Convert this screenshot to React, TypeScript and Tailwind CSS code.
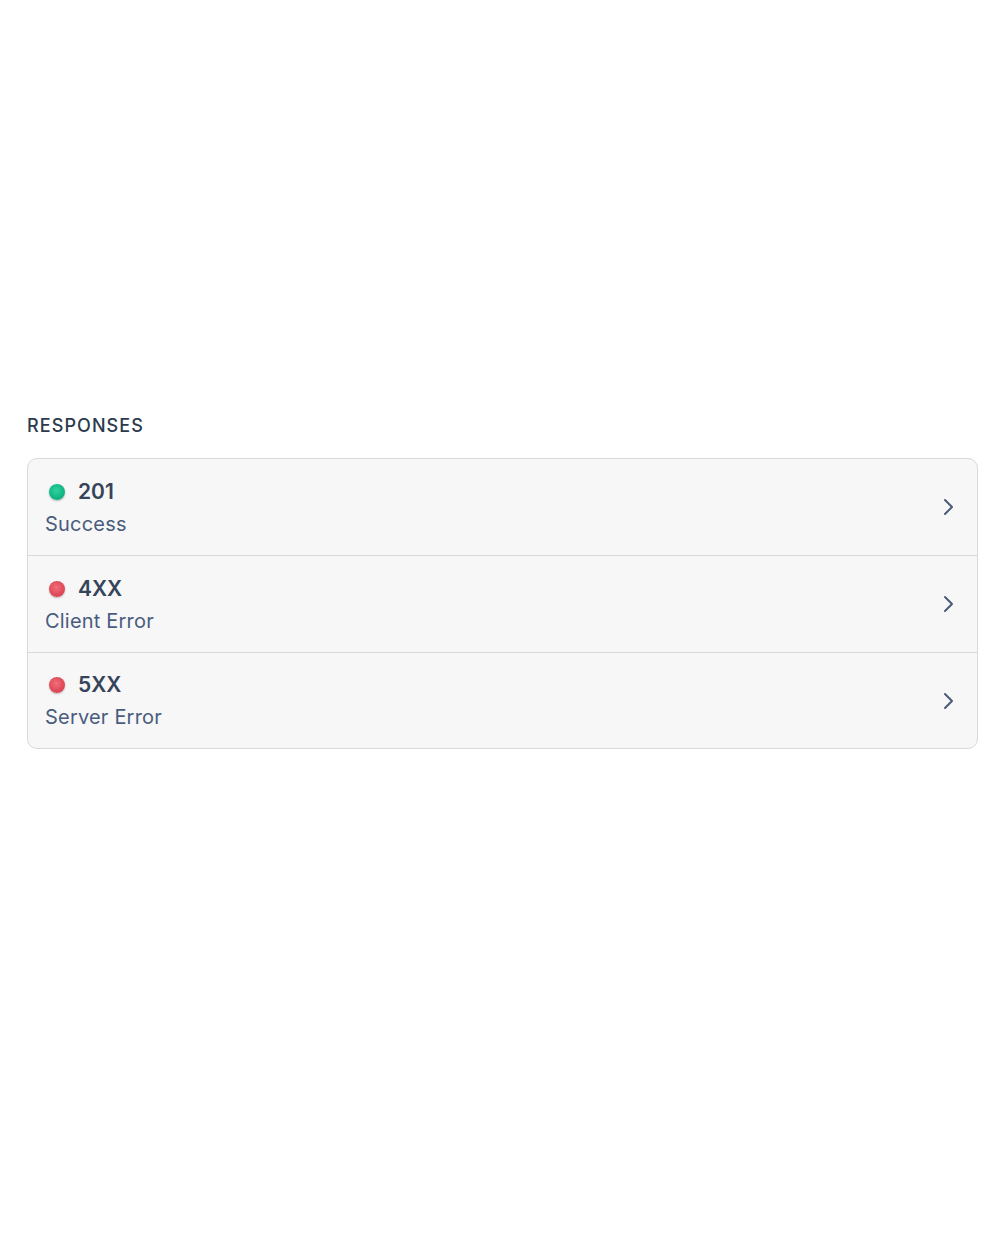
import React from "react";

const rows = [
  { code: "201", label: "Success", color: "green", h: "h-[96px]" },
  { code: "4XX", label: "Client Error", color: "red", h: "h-[97px] border-t border-[#d9d9d9]" },
  { code: "5XX", label: "Server Error", color: "red", h: "h-[96px] border-t border-[#d9d9d9]" },
];

function Dot({ color }: { color: string }) {
  const bg =
    color === "green"
      ? "bg-[radial-gradient(circle_at_45%_40%,#2fd39a_0%,#12b886_55%,#0c9a6e_100%)]"
      : "bg-[radial-gradient(circle_at_45%_40%,#f0707a_0%,#e04b5a_55%,#c93a48_100%)]";
  return (
    <span
      className={`inline-block w-[16px] h-[16px] rounded-full ${bg} shadow-[0_1px_2px_rgba(0,0,0,0.25)]`}
    />
  );
}

export default function App() {
  return (
    <div
      className="w-[1000px] h-[1250px] bg-white"
      style={{ fontFamily: "Inter, 'Noto Sans', sans-serif" }}
    >
      <div className="pt-[414px] px-[27px]">
        <div className="text-[18px] leading-[24px] font-medium tracking-[0.06em] text-[#2d3a4d]">
          RESPONSES
        </div>
        <div className="mt-[20px] w-[951px] rounded-[10px] border border-[#d9d9d9] bg-[#f7f7f7] overflow-hidden">
          {rows.map((r) => (
            <div
              key={r.code}
              className={`flex items-center justify-between pl-[17px] pr-[22px] ${r.h}`}
            >
              <div className="flex flex-col">
                <div className="flex items-center gap-[13px] pl-[4px]">
                  <Dot color={r.color} />
                  <span className="text-[21px] leading-[28px] font-semibold text-[#36445a]">
                    {r.code}
                  </span>
                </div>
                <div className="mt-[5px] text-[20px] leading-[26px] tracking-[0.01em] text-[#4a5c7e]">
                  {r.label}
                </div>
              </div>
              <svg
                width="14"
                height="18"
                viewBox="0 0 14 18"
                fill="none"
                stroke="#4a5a78"
                strokeWidth="2"
                strokeLinecap="round"
                strokeLinejoin="round"
              >
                <path d="M4 2l7 7-7 7" />
              </svg>
            </div>
          ))}
        </div>
      </div>
    </div>
  );
}
